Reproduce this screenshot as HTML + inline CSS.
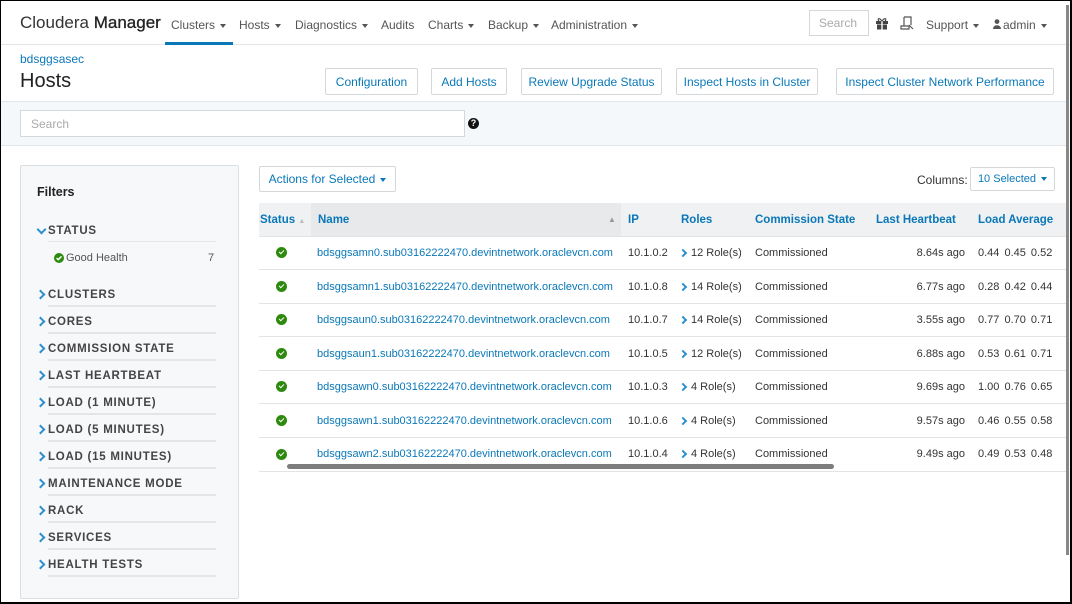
<!DOCTYPE html>
<html><head><meta charset="utf-8"><style>
*{box-sizing:border-box;margin:0;padding:0}
body{width:1072px;height:604px;overflow:hidden;background:#fff;font-family:"Liberation Sans",Arial,sans-serif;color:#333;position:relative}
.abs{position:absolute}
.blue{color:#0a78b8}
.nav{left:0;top:0;width:1072px;height:45px;border-bottom:1px solid #e2e4e6}
.navi{top:18px;font-size:12px;color:#555}
.car{display:inline-block;width:0;height:0;border-left:3.5px solid transparent;border-right:3.5px solid transparent;border-top:4px solid currentColor;vertical-align:middle;margin-left:5px}
.btn{top:68px;height:27px;border:1px solid #d5d8db;border-radius:2px;background:#fff;color:#0a78b8;font-size:12px;text-align:center;line-height:26px}
.band{left:1px;top:101px;width:1065px;height:45px;background:#f4f8fb;border-top:1px solid #e2e6ea;border-bottom:1px solid #e2e6ea}
.filters{left:20px;top:165px;width:219px;height:434px;background:#f7f8fa;border:1px solid #dcdfe2;border-radius:2px}
.fh{left:48px;font-size:11.5px;font-weight:bold;letter-spacing:0.75px;color:#444}
.fl{left:48px;width:168px;height:2px;background:#e3e5e8}
.chev{left:37px;width:7px;height:7px;border-right:2px solid #2d8fd0;border-top:2px solid #2d8fd0;transform:rotate(45deg)}
.th{top:203px;height:33px;background:#f0f1f3;font-size:11.5px;font-weight:bold;color:#0a78b8;line-height:34px}
.row{left:259px;width:807px;height:1px;background:#e1e3e5}
.td{font-size:11px;color:#333}
.td.blue{color:#0a78b8}
.ok{width:11px;height:11px;border-radius:50%;background:#2e8a0e;left:276px}
.ok:after{content:"";position:absolute;left:3px;top:2.5px;width:4px;height:2px;border-left:1.6px solid #fff;border-bottom:1.6px solid #fff;transform:rotate(-45deg)}
.rc{width:6px;height:6px;border-right:2px solid #2d8fd0;border-top:2px solid #2d8fd0;transform:rotate(45deg);left:680px}
.sort{font-size:7px;color:#bbb}
</style></head><body>
<div class="abs nav"></div>
<div class="abs" style="left:20px;top:13px;font-size:17px;color:#333">Cloudera <span style="color:#222;-webkit-text-stroke:0.3px #222">Manager</span></div>
<div class="abs navi blue" style="left:171px">Clusters<span class="car"></span></div>
<div class="abs" style="left:165px;top:42px;width:68px;height:3px;background:#0a78b8"></div>
<div class="abs navi" style="left:239px">Hosts<span class="car"></span></div>
<div class="abs navi" style="left:295px">Diagnostics<span class="car"></span></div>
<div class="abs navi" style="left:381px">Audits</div>
<div class="abs navi" style="left:428px">Charts<span class="car"></span></div>
<div class="abs navi" style="left:488px">Backup<span class="car"></span></div>
<div class="abs navi" style="left:551px">Administration<span class="car"></span></div>
<div class="abs" style="left:809px;top:10px;width:60px;height:26px;border:1px solid #d5d8db;font-size:12px;color:#aaa;padding:5px 9px">Search</div>
<svg class="abs" style="left:875px;top:16px" width="14" height="14" viewBox="0 0 14 14"><rect x="1" y="5" width="12" height="3" fill="#444"/><rect x="2" y="8.5" width="10" height="5" fill="#444"/><rect x="6.3" y="4" width="1.4" height="10" fill="#fff"/><path d="M7 5 C4 1,2 3,4 5 M7 5 C10 1,12 3,10 5" stroke="#444" fill="none" stroke-width="1.2"/></svg>
<svg class="abs" style="left:900px;top:16px" width="15" height="14" viewBox="0 0 15 14"><path d="M4 1h7v8M4 1v9M1 10h8v3H1z M9 9l4 4" stroke="#555" fill="none" stroke-width="1.2"/></svg>
<div class="abs navi" style="left:926px">Support<span class="car"></span></div>
<svg class="abs" style="left:993px;top:19px" width="8" height="10" viewBox="0 0 8 10"><circle cx="4" cy="2.6" r="2.4" fill="#555"/><path d="M0 10 C0 5,8 5,8 10z" fill="#555"/></svg>
<div class="abs navi" style="left:1003px">admin<span class="car"></span></div>

<div class="abs blue" style="left:20px;top:52px;font-size:12px">bdsggsasec</div>
<div class="abs" style="left:20px;top:70px;font-size:20px;color:#222">Hosts</div>
<div class="abs btn" style="left:325px;width:93px">Configuration</div>
<div class="abs btn" style="left:431px;width:76px">Add Hosts</div>
<div class="abs btn" style="left:521px;width:141px">Review Upgrade Status</div>
<div class="abs btn" style="left:676px;width:142px">Inspect Hosts in Cluster</div>
<div class="abs btn" style="left:836px;width:218px">Inspect Cluster Network Performance</div>

<div class="abs band"></div>
<div class="abs" style="left:20px;top:110px;width:445px;height:27px;border:1px solid #d5d8db;background:#fff;font-size:12px;color:#aaa;padding:6px 10px">Search</div>
<div class="abs" style="left:468px;top:118px;width:11px;height:11px;border-radius:50%;background:#111;color:#fff;font-size:9px;font-weight:bold;text-align:center;line-height:11px">?</div>

<div class="abs filters"></div>
<div class="abs" style="left:37px;top:185px;font-size:12.5px;font-weight:bold;color:#222">Filters</div>
<div class="abs" style="left:38px;top:226px;width:7px;height:7px;border-right:2px solid #2d8fd0;border-bottom:2px solid #2d8fd0;transform:rotate(45deg)"></div>
<div class="abs fh" style="top:225px">STATUS</div>
<div class="abs fl" style="top:241px;height:1px"></div>
<svg class="abs" style="left:54px;top:253px" width="10" height="10" viewBox="0 0 10 10"><circle cx="5" cy="5" r="5" fill="#2e8a0e"/><path d="M2.6 5.1l1.7 1.6 3.2-3.3" stroke="#fff" stroke-width="1.5" fill="none"/></svg>
<div class="abs" style="left:66px;top:252px;font-size:11px;color:#555">Good Health</div>
<div class="abs" style="left:208px;top:252px;font-size:11px;color:#555">7</div>

<div class="abs chev" style="top:291px"></div><div class="abs fh" style="top:289px">CLUSTERS</div><div class="abs fl" style="top:305px"></div>
<div class="abs chev" style="top:318px"></div><div class="abs fh" style="top:316px">CORES</div><div class="abs fl" style="top:332px"></div>
<div class="abs chev" style="top:345px"></div><div class="abs fh" style="top:343px">COMMISSION STATE</div><div class="abs fl" style="top:359px"></div>
<div class="abs chev" style="top:372px"></div><div class="abs fh" style="top:370px">LAST HEARTBEAT</div><div class="abs fl" style="top:386px"></div>
<div class="abs chev" style="top:399px"></div><div class="abs fh" style="top:397px">LOAD (1 MINUTE)</div><div class="abs fl" style="top:413px"></div>
<div class="abs chev" style="top:426px"></div><div class="abs fh" style="top:424px">LOAD (5 MINUTES)</div><div class="abs fl" style="top:440px"></div>
<div class="abs chev" style="top:453px"></div><div class="abs fh" style="top:451px">LOAD (15 MINUTES)</div><div class="abs fl" style="top:467px"></div>
<div class="abs chev" style="top:480px"></div><div class="abs fh" style="top:478px">MAINTENANCE MODE</div><div class="abs fl" style="top:494px"></div>
<div class="abs chev" style="top:507px"></div><div class="abs fh" style="top:505px">RACK</div><div class="abs fl" style="top:521px"></div>
<div class="abs chev" style="top:534px"></div><div class="abs fh" style="top:532px">SERVICES</div><div class="abs fl" style="top:548px"></div>
<div class="abs chev" style="top:561px"></div><div class="abs fh" style="top:559px">HEALTH TESTS</div><div class="abs fl" style="top:575px"></div>

<div class="abs" style="left:259px;top:166px;width:137px;height:26px;border:1px solid #d5d8db;border-radius:2px;color:#0a78b8;font-size:12px;line-height:25px;text-align:center">Actions for Selected<span class="car"></span></div>
<div class="abs" style="left:917px;top:173px;font-size:12px;color:#333">Columns:</div>
<div class="abs" style="left:970px;top:167px;width:85px;height:24px;border:1px solid #d5d8db;border-radius:2px;color:#0a78b8;font-size:11px;line-height:22px;text-align:center">10 Selected<span class="car"></span></div>

<div class="abs th" style="left:259px;width:807px"></div>
<div class="abs th" style="left:311px;width:310px;background:#e8e9eb"></div>
<div class="abs th" style="left:260px;background:none">Status <span class="sort">&#9650;</span></div>
<div class="abs th" style="left:318px;background:none">Name</div>
<div class="abs th" style="left:608px;background:none;font-size:8px;color:#999">&#9650;</div>
<div class="abs th" style="left:628px;background:none">IP</div>
<div class="abs th" style="left:681px">Roles</div>
<div class="abs th" style="left:755px">Commission State</div>
<div class="abs th" style="left:876px">Last Heartbeat</div>
<div class="abs th" style="left:978px">Load Average</div>
<div class="abs row" style="top:236px"></div>

<div class="abs ok" style="top:247px"></div><div class="abs td blue" style="left:317px;top:247px">bdsggsamn0.sub03162222470.devintnetwork.oraclevcn.com</div><div class="abs td" style="left:628px;top:247px">10.1.0.2</div><div class="abs rc" style="top:250px"></div><div class="abs td" style="left:691px;top:247px">12 Role(s)</div><div class="abs td" style="left:755px;top:247px">Commissioned</div><div class="abs td" style="left:880px;width:85px;text-align:right;top:247px">8.64s ago</div><div class="abs td" style="left:978px;top:247px;word-spacing:2px">0.44 0.45 0.52</div><div class="abs row" style="top:269px"></div>
<div class="abs ok" style="top:281px"></div><div class="abs td blue" style="left:317px;top:281px">bdsggsamn1.sub03162222470.devintnetwork.oraclevcn.com</div><div class="abs td" style="left:628px;top:281px">10.1.0.8</div><div class="abs rc" style="top:284px"></div><div class="abs td" style="left:691px;top:281px">14 Role(s)</div><div class="abs td" style="left:755px;top:281px">Commissioned</div><div class="abs td" style="left:880px;width:85px;text-align:right;top:281px">6.77s ago</div><div class="abs td" style="left:978px;top:281px;word-spacing:2px">0.28 0.42 0.44</div><div class="abs row" style="top:303px"></div>
<div class="abs ok" style="top:314px"></div><div class="abs td blue" style="left:317px;top:314px">bdsggsaun0.sub03162222470.devintnetwork.oraclevcn.com</div><div class="abs td" style="left:628px;top:314px">10.1.0.7</div><div class="abs rc" style="top:317px"></div><div class="abs td" style="left:691px;top:314px">14 Role(s)</div><div class="abs td" style="left:755px;top:314px">Commissioned</div><div class="abs td" style="left:880px;width:85px;text-align:right;top:314px">3.55s ago</div><div class="abs td" style="left:978px;top:314px;word-spacing:2px">0.77 0.70 0.71</div><div class="abs row" style="top:336px"></div>
<div class="abs ok" style="top:348px"></div><div class="abs td blue" style="left:317px;top:348px">bdsggsaun1.sub03162222470.devintnetwork.oraclevcn.com</div><div class="abs td" style="left:628px;top:348px">10.1.0.5</div><div class="abs rc" style="top:351px"></div><div class="abs td" style="left:691px;top:348px">12 Role(s)</div><div class="abs td" style="left:755px;top:348px">Commissioned</div><div class="abs td" style="left:880px;width:85px;text-align:right;top:348px">6.88s ago</div><div class="abs td" style="left:978px;top:348px;word-spacing:2px">0.53 0.61 0.71</div><div class="abs row" style="top:370px"></div>
<div class="abs ok" style="top:381px"></div><div class="abs td blue" style="left:317px;top:381px">bdsggsawn0.sub03162222470.devintnetwork.oraclevcn.com</div><div class="abs td" style="left:628px;top:381px">10.1.0.3</div><div class="abs rc" style="top:384px"></div><div class="abs td" style="left:691px;top:381px">4 Role(s)</div><div class="abs td" style="left:755px;top:381px">Commissioned</div><div class="abs td" style="left:880px;width:85px;text-align:right;top:381px">9.69s ago</div><div class="abs td" style="left:978px;top:381px;word-spacing:2px">1.00 0.76 0.65</div><div class="abs row" style="top:403px"></div>
<div class="abs ok" style="top:415px"></div><div class="abs td blue" style="left:317px;top:415px">bdsggsawn1.sub03162222470.devintnetwork.oraclevcn.com</div><div class="abs td" style="left:628px;top:415px">10.1.0.6</div><div class="abs rc" style="top:418px"></div><div class="abs td" style="left:691px;top:415px">4 Role(s)</div><div class="abs td" style="left:755px;top:415px">Commissioned</div><div class="abs td" style="left:880px;width:85px;text-align:right;top:415px">9.57s ago</div><div class="abs td" style="left:978px;top:415px;word-spacing:2px">0.46 0.55 0.58</div><div class="abs row" style="top:437px"></div>
<div class="abs ok" style="top:449px"></div><div class="abs td blue" style="left:317px;top:448px">bdsggsawn2.sub03162222470.devintnetwork.oraclevcn.com</div><div class="abs td" style="left:628px;top:448px">10.1.0.4</div><div class="abs rc" style="top:451px"></div><div class="abs td" style="left:691px;top:448px">4 Role(s)</div><div class="abs td" style="left:755px;top:448px">Commissioned</div><div class="abs td" style="left:880px;width:85px;text-align:right;top:448px">9.49s ago</div><div class="abs td" style="left:978px;top:448px;word-spacing:2px">0.49 0.53 0.48</div>
<div class="abs" style="left:287px;top:464px;width:547px;height:5px;border-radius:3px;background:#7d7d7d"></div>
<div class="abs row" style="top:471px"></div>

<div class="abs" style="left:1066px;top:5px;width:3px;height:550px;background:#888"></div>
<div class="abs" style="left:0;top:0;width:1072px;height:604px;border-top:1px solid #000;border-left:1px solid #000;border-bottom:2px solid #000;border-right:2px solid #000"></div>
</body></html>
